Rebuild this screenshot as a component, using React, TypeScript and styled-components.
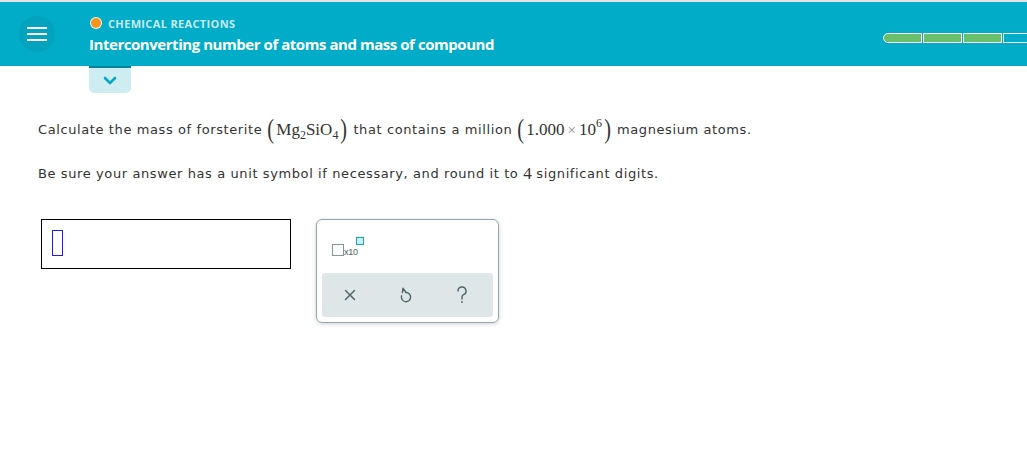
import styled, { createGlobalStyle } from 'styled-components';

const GlobalStyle = createGlobalStyle`
  html, body {
    margin: 0;
    padding: 0;
    background: #ffffff;
  }
  body {
    font-family: "DejaVu Sans", Verdana, sans-serif;
    color: #333333;
  }
`;

const Page = styled.div`
  width: 1027px;
  height: 467px;
  overflow: hidden;
  border-top: 2px solid #e3e3e3;
  box-sizing: border-box;
`;

const Header = styled.header`
  height: 64px;
  background: #00acc8;
  display: flex;
  align-items: center;
`;

const MenuButton = styled.div`
  width: 36px;
  height: 36px;
  margin-left: 19px;
  margin-top: -1px;
  border-radius: 50%;
  background: #03a3be;
  display: flex;
  flex-direction: column;
  align-items: center;
  justify-content: center;
  gap: 4px;
  span {
    display: block;
    width: 20px;
    height: 2px;
    background: #ffffff;
  }
`;

const TitleBlock = styled.div`
  margin-left: 34px;
  display: flex;
  flex-direction: column;
  gap: 3px;
  font-family: "Open Sans", "Lato", sans-serif;
  margin-top: 1px;
`;

const Topic = styled.div`
  display: flex;
  align-items: center;
  gap: 7px;
  padding-left: 2px;
  font-size: 11px;
  font-weight: 700;
  color: #c9e9f0;
  letter-spacing: 0.35px;
`;

const Dot = styled.span`
  width: 10px;
  height: 10px;
  border-radius: 50%;
  background: #f7941d;
  box-shadow: 0 0 0 1px #fff4e6;
`;

const Title = styled.div`
  font-size: 15px;
  font-weight: 700;
  color: #ffffff;
  letter-spacing: -0.45px;
`;

const Progress = styled.div`
  margin-left: auto;
  display: flex;
  gap: 1px;
  margin-top: 7px;
  margin-right: -15px;
`;

const Segment = styled.div<{ $filled: boolean; $first?: boolean }>`
  width: 37px;
  height: 8px;
  border: 1px solid #ffffff;
  background: ${p => (p.$filled ? '#69bf6b' : '#00acc8')};
  border-radius: ${p => (p.$first ? '5px 0 0 5px' : '0')};
  box-sizing: content-box;
`;

const Tab = styled.div`
  width: 42px;
  height: 25px;
  margin-left: 89px;
  background: #cdedf3;
  border-top: 2px solid #0b8197;
  border-radius: 0 0 5px 5px;
  display: flex;
  align-items: center;
  justify-content: center;
`;

const Content = styled.div`
  padding: 26px 38px 0;
`;

const Line = styled.p<{ $gap?: number }>`
  margin: 0;
  font-size: 13px;
  letter-spacing: 0.6px;
  line-height: 22px;
  color: #333333;
  margin-top: ${p => p.$gap ?? 0}px;
  display: flex;
  align-items: center;
  white-space: pre;
`;

const Math = styled.span`
  font-family: "Liberation Serif", "Times New Roman", serif;
  font-size: 17px;
  letter-spacing: 0;
  color: #333333;
  display: inline-flex;
  align-items: center;
  margin: 0 5px 0 4px;
  sub, sup {
    font-size: 12px;
    line-height: 0;
  }
  sub {
    position: relative;
    top: 5px;
    vertical-align: baseline;
  }
  sup {
    position: relative;
    top: -7px;
    vertical-align: baseline;
  }
`;

const Paren = styled.span<{ $side: 'l' | 'r' }>`
  font-size: 27px;
  font-weight: 300;
  transform: scaleX(0.75);
  display: inline-block;
  position: relative;
  top: -1px;
  margin: ${p => (p.$side === 'l' ? '0 1px 0 0' : '0 0 0 1px')};
`;

const Times = styled.span`
  color: #888888;
  margin: 0 3px;
  font-size: 15px;
`;

const Num = styled.span`
  font-family: "Liberation Serif", "Times New Roman", serif;
  font-size: 17px;
  letter-spacing: 0;
`;

const AnswerRow = styled.div`
  display: flex;
  align-items: flex-start;
  margin-top: 34px;
  padding-left: 3px;
  gap: 25px;
`;

const AnswerBox = styled.div`
  width: 238px;
  height: 48px;
  border: 1px solid #000000;
  box-sizing: content-box;
  display: flex;
  align-items: center;
  padding-left: 10px;
`;

const Cursor = styled.div`
  width: 9px;
  height: 24px;
  border: 1px solid #1a1aff;
  margin-top: -2px;
`;

const ToolPanel = styled.div`
  width: 183px;
  height: 104px;
  border: 1px solid #91a6ad;
  border-radius: 6px;
  box-shadow: 0 1px 4px rgba(0, 0, 0, 0.18);
  display: flex;
  flex-direction: column;
  padding: 5px;
  box-sizing: border-box;
`;

const ToolTop = styled.div`
  flex: 1;
  display: flex;
  align-items: flex-start;
  padding: 12px 0 0 10px;
`;

const SciIcon = styled.div`
  display: flex;
  align-items: flex-end;
  position: relative;
  padding-top: 7px;
`;

const BaseSquare = styled.span`
  width: 10px;
  height: 10px;
  border: 1px solid #7f969d;
  display: block;
`;

const SmallText = styled.span`
  font-family: "Liberation Sans", Arial, sans-serif;
  font-size: 9px;
  color: #4d6168;
  line-height: 8px;
  margin-left: 0;
  letter-spacing: -0.3px;
`;

const ExpSquare = styled.span`
  width: 6px;
  height: 6px;
  border: 1px solid #13a5bd;
  background: #c9eef5;
  position: absolute;
  left: 24px;
  top: 0;
`;

const ToolBar = styled.div`
  height: 44px;
  background: #dfe6e8;
  border-radius: 3px;
  display: flex;
  align-items: center;
  justify-content: space-between;
  padding: 0 21px 0 18px;
`;

const ToolButton = styled.span`
  width: 20px;
  height: 20px;
  display: flex;
  align-items: center;
  justify-content: center;
`;

export default function App() {
  return (
    <>
      <GlobalStyle />
      <Page>
        <Header>
          <MenuButton>
            <span />
            <span />
            <span />
          </MenuButton>
          <TitleBlock>
            <Topic>
              <Dot />
              CHEMICAL REACTIONS
            </Topic>
            <Title>Interconverting number of atoms and mass of compound</Title>
          </TitleBlock>
          <Progress>
            <Segment $filled $first />
            <Segment $filled />
            <Segment $filled />
            <Segment $filled={false} />
          </Progress>
        </Header>
        <Tab>
          <svg width="14" height="9" viewBox="0 0 14 9">
            <path d="M2 2 L7 7 L12 2" fill="none" stroke="#0aa6c2" strokeWidth="2.6" strokeLinecap="round" strokeLinejoin="round" />
          </svg>
        </Tab>
        <Content>
          <Line>
            Calculate the mass of forsterite
            <Math>
              <Paren $side="l">(</Paren>Mg<sub>2</sub>SiO<sub>4</sub><Paren $side="r">)</Paren>
            </Math>
            that contains a million
            <Math>
              <Paren $side="l">(</Paren>1.000<Times>×</Times>10<sup>6</sup><Paren $side="r">)</Paren>
            </Math>
            magnesium atoms.
          </Line>
          <Line $gap={22}>
            Be sure your answer has a unit symbol if necessary, and round it to <Num>4</Num> significant digits.
          </Line>
          <AnswerRow>
            <AnswerBox>
              <Cursor />
            </AnswerBox>
            <ToolPanel>
              <ToolTop>
                <SciIcon>
                  <BaseSquare />
                  <SmallText>x10</SmallText>
                  <ExpSquare />
                </SciIcon>
              </ToolTop>
              <ToolBar>
                <ToolButton>
                  <svg width="14" height="14" viewBox="0 0 14 14">
                    <path d="M2.5 2.5 L11.5 11.5 M11.5 2.5 L2.5 11.5" stroke="#4f646b" strokeWidth="1.5" strokeLinecap="round" />
                  </svg>
                </ToolButton>
                <ToolButton>
                  <svg width="12" height="18" viewBox="0 0 12 18">
                    <path d="M6 6.5 A4.6 4.6 0 1 1 1.6 9.8" fill="none" stroke="#4f646b" strokeWidth="1.4" strokeLinecap="round" />
                    <path d="M3 2.2 L6 6.5 M3 2.2 L2.4 6.6" fill="none" stroke="#4f646b" strokeWidth="1.4" strokeLinecap="round" strokeLinejoin="round" />
                  </svg>
                </ToolButton>
                <ToolButton>
                  <svg width="12" height="18" viewBox="0 0 12 18">
                    <path d="M2 5 A4 4 0 1 1 7.5 8.7 C6.3 9.3 6 10 6 11.5 L6 13" fill="none" stroke="#4f646b" strokeWidth="1.4" strokeLinecap="round" />
                    <circle cx="6" cy="16" r="0.9" fill="#4f646b" />
                  </svg>
                </ToolButton>
              </ToolBar>
            </ToolPanel>
          </AnswerRow>
        </Content>
      </Page>
    </>
  );
}
